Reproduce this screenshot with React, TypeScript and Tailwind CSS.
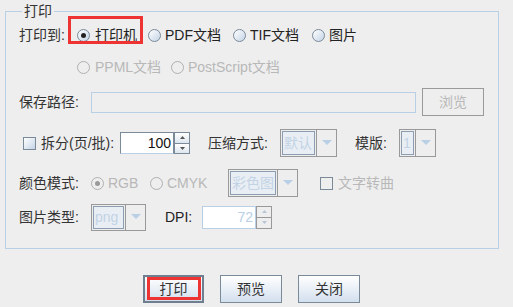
import React from 'react';

const FONT = { fontFamily: '"Liberation Sans", "Noto Sans CJK SC", sans-serif' };

function Radio({ checked, disabled }: { checked?: boolean; disabled?: boolean }) {
  const ring = disabled
    ? 'border-[#b0b0b0] bg-[#eeeeee]'
    : 'border-[#7a8a99] bg-gradient-to-br from-white to-[#c4d4e6]';
  return (
    <span className={`relative flex h-[13px] w-[13px] shrink-0 items-center justify-center rounded-full border ${ring}`}>
      {checked && (
        <span className={`h-[5px] w-[5px] rounded-full ${disabled ? 'bg-[#9a9a9a]' : 'bg-[#222222]'}`} />
      )}
    </span>
  );
}

function Checkbox({ disabled }: { disabled?: boolean }) {
  const box = disabled
    ? 'border-[#7a8a99] bg-[#eeeeee]'
    : 'border-[#7a8a99] bg-gradient-to-br from-white to-[#c4d4e6]';
  return <span className={`h-[13px] w-[13px] shrink-0 border ${box}`} />;
}

function Combo({ value, textW, h = 'h-[28px]' }: { value: string; textW: string; h?: string }) {
  return (
    <div className={`flex ${h} shrink-0`}>
      <div className={`${textW} flex h-full items-center border border-[#999999] p-[1px]`}>
        <div className="flex h-full w-full items-center overflow-hidden border border-[#8c9db2] bg-[#e9eef4] pl-[1px] text-[#c2d3e5]">
          {value}
        </div>
      </div>
      <div className="flex h-full w-[20px] items-center justify-center border border-l-0 border-[#999999]">
        <svg width="10" height="6" viewBox="0 0 10 6">
          <path d="M0 0 L10 0 L5 5 Z" fill="#b8cfe5" />
        </svg>
      </div>
    </div>
  );
}

function SpinArrows({ disabled }: { disabled?: boolean }) {
  const btn = disabled
    ? 'border-[#999999] bg-[#eeeeee]'
    : 'border-[#7a8a99] bg-gradient-to-b from-white to-[#dde6ef]';
  const fill = disabled ? '#b8c6d4' : '#555555';
  return (
    <div className="flex w-[16px] flex-col">
      <div className={`flex flex-1 items-center justify-center border ${btn}`}>
        <svg width="5" height="3" viewBox="0 0 5 3">
          <path d="M0 3 L5 3 L2.5 0 Z" fill={fill} />
        </svg>
      </div>
      <div className={`flex flex-1 items-center justify-center border border-t-0 ${btn}`}>
        <svg width="5" height="3" viewBox="0 0 5 3">
          <path d="M0 0 L5 0 L2.5 3 Z" fill={fill} />
        </svg>
      </div>
    </div>
  );
}

function Button({ label, focused }: { label: string; focused?: boolean }) {
  return (
    <div className="relative">
      <button
        type="button"
        className={`flex h-[28px] items-center justify-center bg-gradient-to-b from-white to-[#d3e0ee] text-[#333333] ${
          focused ? 'w-[61px] border-2 border-[#6f7f90]' : 'w-[62px] border border-[#7a8a99]'
        }`}
      >
        {label}
      </button>
      {focused && (
        <span className="pointer-events-none absolute left-[4px] right-[3px] top-[2px] bottom-[3px] border-[3px] border-[#ee3333]" />
      )}
    </div>
  );
}

export default function App() {
  return (
    <div className="h-[307px] w-[513px] bg-[#eeeeee] pl-[5px] pt-[3px] text-[14px] text-[#333333]" style={FONT}>
      <fieldset className="h-[246px] w-[494px] border border-[#b8cfe5] pl-[13px]">
        <legend className="ml-[3px] px-[2px] leading-[16px] text-[#333333]">打印</legend>

        {/* 打印到 */}
        <div className="mt-[8px] flex h-[17px] items-center leading-[17px]">
          <span className="w-[58px]">打印到:</span>
          <div className="relative flex w-[71px] items-center gap-[5px]">
            <Radio checked />
            <span className="text-[#222222]">打印机</span>
            <span className="pointer-events-none absolute -left-[9px] -top-[11px] h-[28px] w-[75px] border-[3px] border-[#ee3333]" />
          </div>
          <div className="flex w-[85px] items-center gap-[4px]">
            <Radio />
            <span className="text-[#222222]">PDF文档</span>
          </div>
          <div className="flex w-[79px] items-center gap-[4px]">
            <Radio />
            <span className="text-[#222222]">TIF文档</span>
          </div>
          <div className="flex items-center gap-[4px]">
            <Radio />
            <span className="text-[#222222]">图片</span>
          </div>
        </div>

        <div className="mt-[15px] flex h-[17px] items-center pl-[58px] leading-[17px] text-[#b8b8b8]">
          <div className="flex w-[94px] items-center gap-[5px]">
            <Radio disabled />
            <span>PPML文档</span>
          </div>
          <div className="flex items-center gap-[4px]">
            <Radio disabled />
            <span>PostScript文档</span>
          </div>
        </div>

        {/* 保存路径 */}
        <div className="mt-[12px] flex h-[28px] items-center">
          <span className="w-[72px]">保存路径:</span>
          <div className="h-[21px] w-[325px] border border-[#b8cfe5] bg-[#eeeeee]" />
          <button
            type="button"
            className="ml-[6px] flex h-[28px] w-[62px] items-center justify-center border border-[#9a9a9a] bg-[#eeeeee] text-[#b8b8b8]"
          >
            浏览
          </button>
        </div>

        {/* 拆分 / 压缩 / 模版 */}
        <div className="mt-[13px] flex h-[28px] items-center">
          <div className="ml-[4px] flex w-[97px] items-center gap-[5px]">
            <Checkbox />
            <span className="whitespace-nowrap">拆分(页/批):</span>
          </div>
          <div className="flex h-[22px] w-[70px]">
            <div className="flex flex-1 items-center justify-end border border-[#7a8a99] border-b-[#b8cfe5] bg-white pr-[2px] text-[#111111]">
              100
            </div>
            <SpinArrows />
          </div>
          <span className="ml-[18px] w-[72px]">压缩方式:</span>
          <Combo value="默认" textW="w-[37px]" />
          <span className="ml-[18px] w-[44px]">模版:</span>
          <Combo value="1" textW="w-[17px]" />
        </div>

        {/* 颜色模式 */}
        <div className="mt-[12px] flex h-[28px] items-center">
          <span className="w-[72px]">颜色模式:</span>
          <div className="flex w-[59px] items-center gap-[4px] text-[#b8b8b8]">
            <Radio checked disabled />
            <span>RGB</span>
          </div>
          <div className="flex w-[78px] items-center gap-[4px] text-[#b8b8b8]">
            <Radio disabled />
            <span>CMYK</span>
          </div>
          <Combo value="彩色图" textW="w-[50px]" />
          <div className="ml-[22px] flex items-center gap-[5px] text-[#b8b8b8]">
            <Checkbox disabled />
            <span>文字转曲</span>
          </div>
        </div>

        {/* 图片类型 / DPI */}
        <div className="mt-[6px] flex h-[28px] items-center">
          <span className="w-[72px]">图片类型:</span>
          <Combo value="png" textW="w-[35px]" h="h-[27px]" />
          <span className="ml-[19px] w-[37px] text-[#222222]">DPI:</span>
          <div className="flex h-[23px] w-[70px]">
            <div className="flex flex-1 items-center justify-end border border-[#b8cfe5] bg-white pr-[2px] text-[#b8cfe5]">
              72
            </div>
            <SpinArrows disabled />
          </div>
        </div>
      </fieldset>

      <div className="mt-[26px] flex gap-[16px] pl-[138px]">
        <Button label="打印" focused />
        <Button label="预览" />
        <Button label="关闭" />
      </div>
    </div>
  );
}
